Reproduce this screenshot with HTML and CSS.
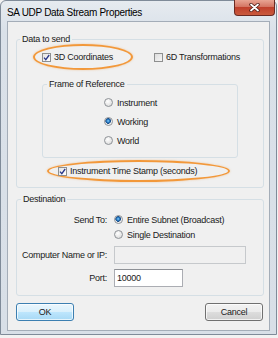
FILE: index.html
```html
<!DOCTYPE html>
<html>
<head>
    <title>SA UDP Data Stream Properties</title>
    <link rel="stylesheet" href="styles.css">
</head>
<body>

    <div class="window">
        <div class="titlebar">
            <span class="title">SA UDP Data Stream Properties</span>
            <span class="close">
                <svg width="11" height="9" viewBox="0 0 11 9">
                    <path d="M2 1.5 L9 7.5 M9 1.5 L2 7.5" stroke="#4b1a14" stroke-width="3.4" stroke-linecap="round"/>
                    <path d="M2 1.5 L9 7.5 M9 1.5 L2 7.5" stroke="#ffffff" stroke-width="1.8" stroke-linecap="round"/>
                </svg>
            </span>
        </div>

        <div class="client">
            <fieldset class="group">
                <legend>Data to send</legend>
                <div class="row-top">
                    <span class="mark mark-coords">
                        <span class="check on">
                            <svg width="7" height="7" viewBox="0 0 7 7"><path d="M1 3.6 L2.8 5.6 L6.2 1" fill="none" stroke="#27368a" stroke-width="1.3"/></svg>
                        </span>3D Coordinates
                    </span>
                    <span class="opt opt-6d"><span class="check"></span>6D Transformations</span>
                </div>

                <fieldset class="group frame">
                    <legend>Frame of Reference</legend>
                    <div class="radio-row"><span class="radio"></span>Instrument</div>
                    <div class="radio-row"><span class="radio on"></span>Working</div>
                    <div class="radio-row"><span class="radio"></span>World</div>
                </fieldset>

                <div class="mark mark-stamp">
                    <span class="check on">
                        <svg width="7" height="7" viewBox="0 0 7 7"><path d="M1 3.6 L2.8 5.6 L6.2 1" fill="none" stroke="#27368a" stroke-width="1.3"/></svg>
                    </span>Instrument Time Stamp (seconds)
                </div>
            </fieldset>

            <fieldset class="group dest">
                <legend>Destination</legend>
                <div class="dest-row short">
                    <span class="lbl">Send To:</span>
                    <span class="radio on"></span>Entire Subnet (Broadcast)
                </div>
                <div class="dest-row short">
                    <span class="lbl"></span>
                    <span class="radio"></span>Single Destination
                </div>
                <div class="dest-row field">
                    <span class="lbl">Computer Name or IP:</span>
                    <span class="textbox disabled"></span>
                </div>
                <div class="dest-row field port-row">
                    <span class="lbl">Port:</span>
                    <span class="textbox port">10000</span>
                </div>
            </fieldset>

            <div class="buttons">
                <button type="button" class="btn default">OK</button>
                <button type="button" class="btn">Cancel</button>
            </div>
        </div>
    </div>

</body>
</html>
```

FILE: styles.css
```css
body {
    margin: 0;
    width: 278px;
    height: 338px;
    background-color: #f2f2f2;
    font-family: "Liberation Sans", Arial, sans-serif;
    font-size: 9px;
    letter-spacing: -0.25px;
    color: #1a1a1a;
    overflow: hidden;
}

.window {
    width: 277px;
    box-sizing: border-box;
    border: 1px solid #7f8b99;
    border-radius: 6px 6px 0 0;
    background: linear-gradient(#e6ebf0, #dae1e9 30px, #d8dfe7);
    padding-bottom: 3px;
}

.titlebar {
    height: 20px;
    display: flex;
    justify-content: space-between;
}

.title {
    padding: 6px 0 0 6px;
    font-size: 10px;
    letter-spacing: -0.3px;
    color: #000;
}

.close {
    width: 41px;
    height: 16px;
    margin-right: 1px;
    margin-top: -1px;
    box-sizing: border-box;
    border: 1px solid #6b2a22;
    border-top: none;
    border-radius: 0 0 4px 4px;
    background: linear-gradient(#e8a493, #d47563 45%, #c0402c 50%, #c95a3d);
    display: flex;
    justify-content: center;
    align-items: center;
}

.client {
    margin: 0 6px 0 6px;
    border: 1px solid #a4adb8;
    background-color: #f0f0f0;
    padding-bottom: 9px;
}

.group {
    margin: 12px 5px 0 8px;
    padding: 0 0 5px 0;
    border: 1px solid #d5dfe5;
    border-radius: 3px;
    min-width: 0;
}

.group legend {
    line-height: 10px;
    padding: 0 2px;
    margin-left: 3px;
}

.row-top {
    display: flex;
    align-items: center;
}

.mark {
    box-sizing: border-box;
    border: 2px solid #f2983a;
    border-radius: 50%;
    box-shadow: 0 0 2px rgba(242, 152, 58, 0.5);
    display: flex;
    align-items: center;
}

.mark-coords {
    width: 100px;
    height: 26px;
    margin-left: 16px;
    padding-left: 7px;
}

.opt {
    display: flex;
    align-items: center;
}

.opt-6d {
    margin-left: 21px;
}

.check {
    width: 9px;
    height: 9px;
    box-sizing: border-box;
    border: 1px solid #8e8f8f;
    background: linear-gradient(135deg, #dcdcdc, #f6f6f6);
    margin-right: 3px;
    display: flex;
    justify-content: center;
    align-items: center;
}

.check.on {
    background: linear-gradient(135deg, #e4e4e4, #ffffff);
}

.frame {
    margin: 9px 25px 0 25px;
    padding: 4px 0 7px 0;
}

.frame legend {
    margin-left: 4px;
}

.radio-row {
    height: 19px;
    margin-left: 61px;
    display: flex;
    align-items: center;
}

.radio {
    width: 9px;
    height: 9px;
    box-sizing: border-box;
    border: 1px solid #8e9297;
    border-radius: 50%;
    background: radial-gradient(circle at 40% 35%, #ffffff, #d4d4d4);
    margin-right: 4px;
    flex-shrink: 0;
}

.radio.on {
    background: radial-gradient(circle at 45% 42%, #9fdcff 0, #2d86d0 1.2px, #1b4c86 2.6px, #e9e9e9 3px, #ffffff 4.5px);
}

.mark-stamp {
    width: 183px;
    height: 22px;
    margin: 2px 0 0 30px;
    padding-left: 9px;
}

.dest {
    margin-top: 6px;
    padding: 8px 0 8px 0;
}

.dest legend {
    margin-left: 4px;
}

.dest-row {
    display: flex;
    align-items: center;
}

.dest-row.short {
    height: 15px;
}

.dest-row.field {
    height: 18px;
    margin-top: 4px;
}

.dest-row.port-row {
    margin-top: 5px;
}

.lbl {
    width: 90px;
    margin-right: 7px;
    text-align: right;
    flex-shrink: 0;
}

.textbox {
    height: 18px;
    box-sizing: border-box;
    border: 1px solid #abadb3;
    padding-left: 2px;
    display: flex;
    align-items: center;
}

.textbox.disabled {
    width: 132px;
    background-color: #f0f0f0;
    border-color: #c6c9cc;
}

.textbox.port {
    width: 69px;
    background-color: #ffffff;
    border-top-color: #8e9196;
}

.buttons {
    display: flex;
    justify-content: space-between;
    margin: 7px 6px 0 8px;
}

.btn {
    width: 58px;
    height: 18px;
    padding: 0;
    font-family: "Liberation Sans", Arial, sans-serif;
    font-size: 9px;
    letter-spacing: -0.25px;
    color: #1a1a1a;
    border: 1px solid #707070;
    border-radius: 3px;
    box-shadow: inset 0 0 0 1px rgba(255, 255, 255, 0.7);
    background: linear-gradient(#f3f3f3, #ebebeb 50%, #dddddd 50%, #cfcfcf);
}

.btn.default {
    border-color: #3c7fb1;
    background: linear-gradient(#eaf6fd, #d9f0fc 50%, #bee6fd 50%, #a7d9f5);
}
```
